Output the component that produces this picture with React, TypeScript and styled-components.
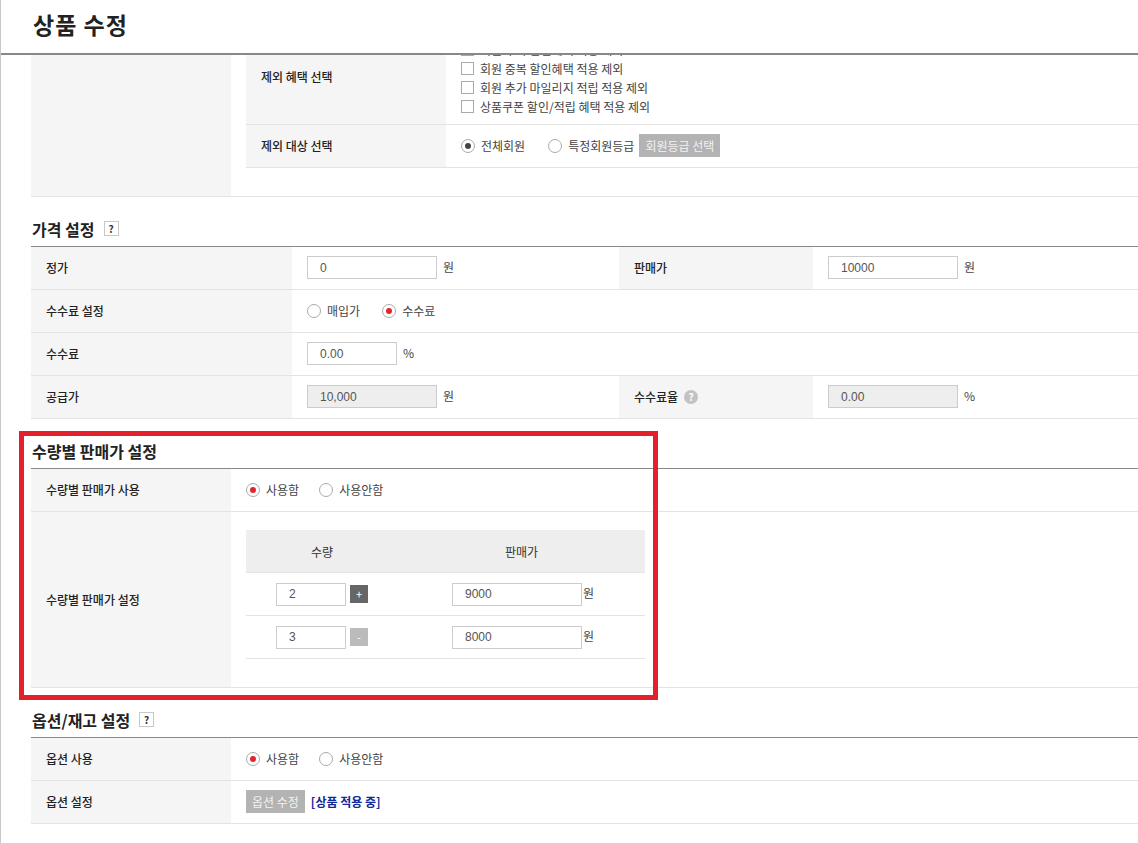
import React from "react";
import styled, { createGlobalStyle } from "styled-components";

const GlobalStyle = createGlobalStyle`
  html, body {
    margin: 0;
    padding: 0;
    background: #fff;
  }
  body {
    font-family: "Noto Sans CJK KR", "Noto Sans", sans-serif;
    font-size: 12px;
    color: #333;
  }
  * {
    box-sizing: border-box;
  }
`;

const Page = styled.div`
  position: relative;
  height: 843px;
  border-left: 1px solid #c9c9c9;
  display: flex;
  flex-direction: column;
  overflow: hidden;
`;

const Header = styled.header`
  flex: none;
  height: 55px;
  padding: 9px 0 0 32px;
  border-bottom: 2px solid #888;
  background: #fff;
  position: relative;
  z-index: 1;
`;

const Title = styled.h1`
  margin: 0;
  font-size: 23px;
  line-height: 30px;
  font-weight: 700;
  color: #222;
  letter-spacing: 1px;
`;

const Viewport = styled.div`
  flex: 1;
  overflow: hidden;
`;

const Content = styled.div`
  margin-top: -25px;
  padding-left: 30px;
`;

const SectionHead = styled.h3`
  margin: 0;
  height: 49px;
  padding-top: 14px;
  padding-left: 1px;
  display: flex;
  align-items: center;
  font-size: 16px;
  font-weight: 700;
  color: #222;
`;

const HelpBox = styled.span`
  margin-left: 9px;
  width: 15px;
  height: 15px;
  border: 1px solid #c8c8c8;
  display: inline-flex;
  align-items: center;
  justify-content: center;
  font-size: 10px;
  font-weight: 700;
  color: #333;
`;

const HelpCircle = styled.span`
  margin-left: 6px;
  width: 14px;
  height: 14px;
  border-radius: 50%;
  background: #c2c2c2;
  color: #fff;
  display: inline-flex;
  align-items: center;
  justify-content: center;
  font-size: 10px;
  font-weight: 700;
`;

const Table = styled.div`
  border-top: 1px solid #888;
`;

const Row = styled.div<{ $cols: string; $h?: number }>`
  display: grid;
  grid-template-columns: ${({ $cols }) => $cols};
  min-height: ${({ $h }) => $h ?? 43}px;
  border-bottom: 1px solid #e3e3e3;
`;

const Label = styled.div`
  background: #f5f5f5;
  padding: 0 15px 1px;
  display: flex;
  align-items: center;
  color: #222;
  font-weight: 500;
`;

const Value = styled.div`
  padding: 0 15px 1px;
  display: flex;
  align-items: center;
  color: #444;
`;

const OuterSide = styled.div`
  background: #f5f5f5;
`;

const OuterBody = styled.div<{ $pt?: number }>`
  padding: ${({ $pt }) => $pt ?? 0}px 0 28px 15px;
`;

const CheckList = styled.div`
  padding: 10px 15px 8px;
  display: flex;
  flex-direction: column;
  color: #444;
`;

const CheckLine = styled.label`
  flex: none;
  height: 19px;
  display: flex;
  align-items: center;
  gap: 6px;
`;

const Check = styled.span`
  width: 13px;
  height: 13px;
  border: 1px solid #aaa;
  background: #fff;
`;

const RadioGroup = styled.div<{ $gap?: number }>`
  display: flex;
  align-items: center;
  gap: ${({ $gap }) => $gap ?? 22}px;
`;

const RadioItem = styled.label`
  display: flex;
  align-items: center;
  gap: 6px;
  color: #444;
`;

const RadioCircle = styled.span<{ $on?: boolean; $dot?: string }>`
  width: 14px;
  height: 14px;
  border-radius: 50%;
  border: 1px solid #aaa;
  background: #fff;
  display: inline-flex;
  align-items: center;
  justify-content: center;
  &::after {
    content: "";
    width: 6px;
    height: 6px;
    border-radius: 50%;
    background: ${({ $dot }) => $dot ?? "#e3262b"};
    display: ${({ $on }) => ($on ? "block" : "none")};
  }
`;

const Input = styled.div<{ $w: number; $disabled?: boolean }>`
  width: ${({ $w }) => $w}px;
  height: 23px;
  border: 1px solid #ccc;
  background: ${({ $disabled }) => ($disabled ? "#eee" : "#fff")};
  padding-left: 12px;
  display: flex;
  align-items: center;
  color: #555;
  font-family: "Liberation Sans", Arial, sans-serif;
  font-size: 12px;
`;

const Unit = styled.span<{ $gap?: number }>`
  margin-left: ${({ $gap }) => $gap ?? 6}px;
  color: #444;
  align-self: flex-start;
  margin-top: 11px;
`;

const GreyButton = styled.span`
  height: 23px;
  padding: 0 6px;
  background: #b3b3b3;
  color: #f2f2f2;
  display: inline-flex;
  align-items: center;
`;

const AppliedText = styled.span`
  margin-left: 6px;
  color: #10289c;
  font-weight: 700;
`;

const QtyTable = styled.div`
  width: 399px;
`;

const QtyHead = styled.div`
  display: grid;
  grid-template-columns: 152px 1fr;
  height: 43px;
  background: #eee;
  color: #333;
  border-bottom: 1px solid #e5e5e5;
  & > span {
    display: flex;
    align-items: center;
    justify-content: center;
  }
`;

const QtyRow = styled.div`
  display: grid;
  grid-template-columns: 152px 1fr;
  height: 43px;
  border-bottom: 1px solid #e3e3e3;
`;

const QtyCell = styled.div`
  display: flex;
  align-items: center;
  justify-content: center;
  gap: 4px;
`;

const PriceCell = styled.div`
  display: flex;
  align-items: center;
  padding-left: 54px;
`;

const StepButton = styled.span<{ $dark?: boolean }>`
  width: 18px;
  height: 18px;
  background: ${({ $dark }) => ($dark ? "#666" : "#bbb")};
  color: #fff;
  font-size: 11px;
  display: inline-flex;
  align-items: center;
  justify-content: center;
`;

const Highlight = styled.div`
  position: absolute;
  left: 18px;
  top: 431px;
  width: 639px;
  height: 269px;
  border: 5px solid #e4212b;
  pointer-events: none;
`;

const Radio = ({ label, on, dot }: { label: string; on?: boolean; dot?: string }) => (
  <RadioItem>
    <RadioCircle $on={on} $dot={dot} />
    {label}
  </RadioItem>
);

const PRICE_COLS = "261px 327px 194px 1fr";
const COLS = "200px 1fr";

const CHECKS = [
  "회원 추가 할인혜택 적용 제외",
  "회원 중복 할인혜택 적용 제외",
  "회원 추가 마일리지 적립 적용 제외",
  "상품쿠폰 할인/적립 혜택 적용 제외",
];

const QTY_ROWS = [
  { qty: "2", price: "9000", plus: true },
  { qty: "3", price: "8000", plus: false },
];

export default function App() {
  return (
    <>
      <GlobalStyle />
      <Page>
        <Header>
          <Title>상품 수정</Title>
        </Header>
        <Viewport>
          <Content>
            <Row $cols={COLS}>
              <OuterSide />
              <OuterBody>
                <Row $cols={COLS}>
                  <Label>제외 혜택 선택</Label>
                  <CheckList>
                    {CHECKS.map((c) => (
                      <CheckLine key={c}>
                        <Check />
                        {c}
                      </CheckLine>
                    ))}
                  </CheckList>
                </Row>
                <Row $cols={COLS}>
                  <Label>제외 대상 선택</Label>
                  <Value>
                    <RadioGroup $gap={23}>
                      <Radio label="전체회원" on dot="#444" />
                      <RadioItem>
                        <RadioCircle />
                        특정회원등급
                        <GreyButton style={{ marginLeft: -1 }}>회원등급 선택</GreyButton>
                      </RadioItem>
                    </RadioGroup>
                  </Value>
                </Row>
              </OuterBody>
            </Row>

            <SectionHead>
              가격 설정<HelpBox>?</HelpBox>
            </SectionHead>
            <Table>
              <Row $cols={PRICE_COLS}>
                <Label>정가</Label>
                <Value>
                  <Input $w={130}>0</Input>
                  <Unit>원</Unit>
                </Value>
                <Label>판매가</Label>
                <Value>
                  <Input $w={130}>10000</Input>
                  <Unit>원</Unit>
                </Value>
              </Row>
              <Row $cols="261px 1fr">
                <Label>수수료 설정</Label>
                <Value>
                  <RadioGroup>
                    <Radio label="매입가" />
                    <Radio label="수수료" on />
                  </RadioGroup>
                </Value>
              </Row>
              <Row $cols="261px 1fr">
                <Label>수수료</Label>
                <Value>
                  <Input $w={90}>0.00</Input>
                  <Unit>%</Unit>
                </Value>
              </Row>
              <Row $cols={PRICE_COLS}>
                <Label>공급가</Label>
                <Value>
                  <Input $w={130} $disabled>10,000</Input>
                  <Unit>원</Unit>
                </Value>
                <Label>
                  수수료율<HelpCircle>?</HelpCircle>
                </Label>
                <Value>
                  <Input $w={130} $disabled>0.00</Input>
                  <Unit>%</Unit>
                </Value>
              </Row>
            </Table>

            <SectionHead>수량별 판매가 설정</SectionHead>
            <Table>
              <Row $cols={COLS}>
                <Label>수량별 판매가 사용</Label>
                <Value>
                  <RadioGroup $gap={20}>
                    <Radio label="사용함" on />
                    <Radio label="사용안함" />
                  </RadioGroup>
                </Value>
              </Row>
              <Row $cols={COLS}>
                <Label>수량별 판매가 설정</Label>
                <OuterBody $pt={18}>
                  <QtyTable>
                    <QtyHead>
                      <span>수량</span>
                      <span>판매가</span>
                    </QtyHead>
                    {QTY_ROWS.map((r) => (
                      <QtyRow key={r.qty}>
                        <QtyCell>
                          <Input $w={70}>{r.qty}</Input>
                          <StepButton $dark={r.plus}>{r.plus ? "+" : "-"}</StepButton>
                        </QtyCell>
                        <PriceCell>
                          <Input $w={130}>{r.price}</Input>
                          <Unit $gap={1}>원</Unit>
                        </PriceCell>
                      </QtyRow>
                    ))}
                  </QtyTable>
                </OuterBody>
              </Row>
            </Table>

            <SectionHead>
              옵션/재고 설정<HelpBox>?</HelpBox>
            </SectionHead>
            <Table>
              <Row $cols={COLS}>
                <Label>옵션 사용</Label>
                <Value>
                  <RadioGroup $gap={20}>
                    <Radio label="사용함" on />
                    <Radio label="사용안함" />
                  </RadioGroup>
                </Value>
              </Row>
              <Row $cols={COLS}>
                <Label>옵션 설정</Label>
                <Value>
                  <GreyButton>옵션 수정</GreyButton>
                  <AppliedText>[상품 적용 중]</AppliedText>
                </Value>
              </Row>
            </Table>
          </Content>
        </Viewport>
        <Highlight />
      </Page>
    </>
  );
}
